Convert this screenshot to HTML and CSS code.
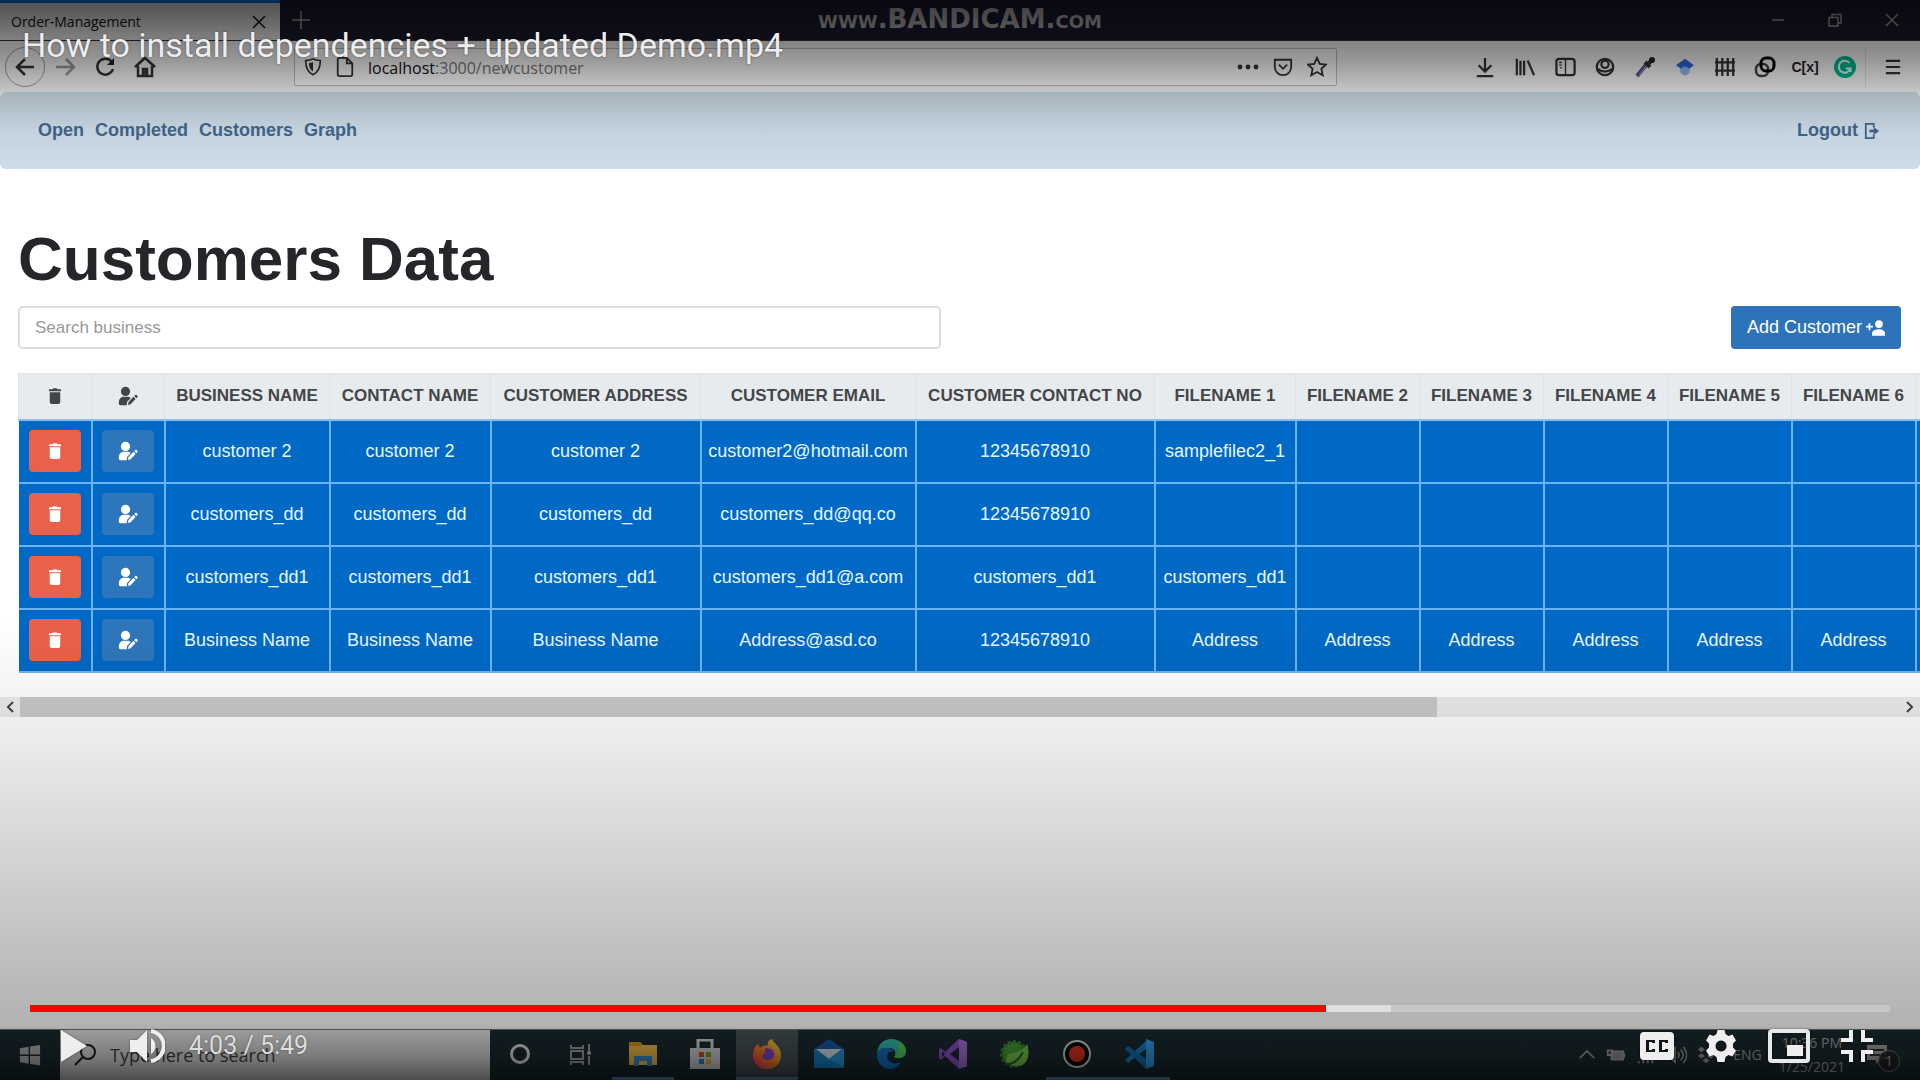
FILE: index.html
```html
<!DOCTYPE html>
<html lang="en">
<head>
<meta charset="utf-8">
<title>How to install dependencies + updated Demo.mp4</title>
<link rel="stylesheet" href="styles.css">
</head>
<body>
<svg class="sprite" aria-hidden="true">
  <symbol id="trash" viewBox="0 0 24 24"><path d="M5 7h14v13a2.500 2.500 0 0 1-2.500 2.500h-9A2.500 2.500 0 0 1 5 20zM4 3h4.500L10 1.500h4L15.500 3H20v2.500H4z"/></symbol>
  <symbol id="user-edit" viewBox="0 0 24 24"><circle cx="9" cy="6.500" r="5.500"/><path d="M1 20c0-4.500 3-7 6-7h4c2 0 3.200.6 4.200 1.600L11 19l-.6 4H3c-1.300 0-2-.9-2-2zM12.500 19.500l6-6.500 2.600 2.600-6 6.400-3.100.7zM19.500 12l1.300-1.200c.6-.5 1.200-.5 1.700 0l.8.900c.5.500.5 1.100 0 1.700L22.100 14.700z"/></symbol>
  <symbol id="win" viewBox="0 0 24 24"><path d="M1 4.500 10.500 3v8.500H1zM12 2.800 23 1v10.500H12zM1 13h9.500v8.500L1 20zM12 13h11v10.500l-11-1.800z"/></symbol>
</svg>
<div class="player">
  <div class="screen">
    <header class="tabs">
      <div class="tab"><span>Order-Management</span><button aria-label="Close tab"><svg viewBox="0 0 14 14" width="14" height="14"><path d="M1 1l12 12M13 1 1 13"/></svg></button></div>
      <button class="new-tab" aria-label="New tab"><svg viewBox="0 0 18 18" width="18" height="18"><path d="M9 0v18M0 9h18"/></svg></button>
      <div class="watermark"><span>www.</span>BANDICAM<span>.com</span></div>
      <div class="window-buttons">
        <button aria-label="Minimize"><svg viewBox="0 0 14 14" width="14" height="14"><path d="M1 7h12"/></svg></button>
        <button aria-label="Restore"><svg viewBox="0 0 14 14" width="14" height="14"><path d="M1 4.500h9v8.500H1zM4 4V1.500h9V10h-3"/></svg></button>
        <button aria-label="Close window"><svg viewBox="0 0 14 14" width="14" height="14"><path d="M1 1l12 12M13 1 1 13"/></svg></button>
      </div>
    </header>

    <div class="toolbar">
      <div class="nav-buttons">
        <button class="back" aria-label="Back"><svg viewBox="0 0 22 22" width="22" height="22"><path d="M20 11H3M11 3l-8 8 8 8"/></svg></button>
        <button class="forward" aria-label="Forward"><svg viewBox="0 0 22 22" width="22" height="22"><path d="M2 11h17M12 3l8 8-8 8"/></svg></button>
        <button aria-label="Reload"><svg viewBox="0 0 22 22" width="22" height="22"><path d="M17.500 5.500A8 8 0 1 0 19 13"/><path d="M20 2v7h-7z" fill="#222" stroke="none"/></svg></button>
        <button aria-label="Home"><svg viewBox="0 0 22 22" width="22" height="22"><path d="M1 11 11 2l10 9M4 10v10h14V10"/><path d="M9 20v-7h4v7" fill="#444"/></svg></button>
      </div>
      <div class="address">
        <svg class="line" viewBox="0 0 22 22" width="18" height="20"><path d="M11 1c3 2 6 2 9 2 0 8-2 14-9 17.500C4 17 2 11 2 3c3 0 6 0 9-2z"/><path d="M11 5c-2 1-3 1-5 1.300C6 11 8 15 11 16.500z" fill="#333" stroke="none"/></svg>
        <svg class="line" viewBox="0 0 22 22" width="20" height="20"><path d="M3 3c0-1 1-2 2-2h8l6 6v12c0 1-1 2-2 2H5c-1 0-2-1-2-2zM13 1v6h6"/></svg>
        <p class="url"><b>localhost</b>:3000/newcustomer</p>
        <svg class="dots" viewBox="0 0 22 22" width="22" height="22"><circle cx="3" cy="11" r="2.400"/><circle cx="11" cy="11" r="2.400"/><circle cx="19" cy="11" r="2.400"/></svg>
        <svg class="line" viewBox="0 0 22 22" width="22" height="20"><path d="M2 3h18v8a9 9 0 0 1-18 0zM6.500 8.500 11 13l4.500-4.500"/></svg>
        <svg class="line" viewBox="0 0 22 22" width="20" height="22"><path d="m11 1 3 6.500 7 .8-5.200 4.700 1.500 7L11 16.500 4.700 20l1.500-7L1 8.300l7-.8z"/></svg>
      </div>
      <div class="extensions">
        <button aria-label="Downloads"><svg viewBox="0 0 22 22" width="20" height="22"><path d="M11 1v14M4 9l7 7 7-7M2 21h18"/></svg></button>
        <button aria-label="Library"><svg viewBox="0 0 22 22" width="20" height="22"><path d="M2 2v18M6 4v16M10 4v16M14 4l7 16"/></svg></button>
        <button aria-label="Sidebars"><svg viewBox="0 0 22 22" width="21" height="20"><rect x="1" y="2" width="20" height="18" rx="3"/><path d="M11 2v18M4 6h3M4 9h3M5 12h2" stroke-width="1.500"/></svg></button>
        <button aria-label="Account"><svg viewBox="0 0 22 22" width="20" height="20"><circle cx="11" cy="11" r="9"/><circle cx="11" cy="8" r="4"/><path d="M3 13c4 4 12 4 16 0"/></svg></button>
        <button aria-label="Colour picker"><svg viewBox="0 0 22 22" width="22" height="22"><path d="M3 20 12 9" stroke="#574d8b" stroke-width="4"/><path d="M5 19 14 8" stroke="#aaa" stroke-width="1"/><path d="m11 6 5 5M14 8l4-4" stroke-width="4"/><circle cx="18" cy="4" r="3" fill="#222" stroke="none"/></svg></button>
        <button aria-label="Scholar"><svg viewBox="0 0 22 22" width="18" height="22"><circle cx="11" cy="15" r="6" fill="#8eb8f8" stroke="none"/><path d="m11 1 11 8-6 4c-3-3-7-3-10 0L0 9z" fill="#2868d8" stroke="none"/></svg></button>
        <button aria-label="Grid"><svg viewBox="0 0 22 22" width="22" height="20"><path d="M2 1v20M8 1v20M14 1v20M20 1v20M0 6h22M0 15h22"/></svg></button>
        <button aria-label="Rings"><svg viewBox="0 0 22 22" width="22" height="22"><rect x="2" y="8" width="12" height="12" rx="5" stroke="#444"/><rect x="7" y="2" width="13" height="13" rx="5" stroke="#000" stroke-width="3"/></svg></button>
        <button class="cx" aria-label="Formula">C[x]</button>
        <button aria-label="Grammar"><svg viewBox="0 0 22 22" width="22" height="22"><circle cx="11" cy="11" r="11" fill="#00b58b" stroke="none"/><path d="M15.500 7a6 6 0 1 0 1 5.500h-4.500M16.500 12v4" stroke="#dff" stroke-width="2"/></svg></button>
        <button class="menu" aria-label="Menu"><svg viewBox="0 0 18 18" width="16" height="18"><path d="M1 2h16M1 9h16M1 16h16"/></svg></button>
      </div>
    </div>

    <nav class="site-nav">
      <a href="#">Open</a><a href="#">Completed</a><a href="#">Customers</a><a href="#">Graph</a>
      <a class="logout" href="#">Logout <svg viewBox="0 0 18 20" width="16" height="20"><path d="M11 6V2H2v16h9v-4"/><path d="M6 10h6" stroke-width="3"/><path d="M11 5.500 17 10l-6 4.500z" fill="#41668c" stroke="none"/></svg></a>
    </nav>

    <main>
      <h1>Customers Data</h1>
      <div class="actions">
        <input type="search" placeholder="Search business" aria-label="Search business">
        <button class="add">Add Customer <svg viewBox="0 0 22 20" width="19" height="18"><circle cx="15" cy="5.500" r="4.500"/><path d="M7 19v-3c0-3 5-4.500 8-4.500s7 1.500 7 4.500v3zM0 7.500h3v-3h2v3h3v2H5v3H3v-3H0z"/></svg></button>
      </div>
      <div class="table-wrap">
        <table>
          <colgroup><col class="c-icon"><col class="c-icon"><col class="c-business"><col class="c-contact"><col class="c-address"><col class="c-email"><col class="c-phone"><col class="c-file1"><col class="c-file"><col class="c-file"><col class="c-file"><col class="c-file"><col class="c-file"><col class="c-file"></colgroup>
          <thead><tr>
            <th><svg class="ico" width="18" height="18"><use href="#trash"/></svg></th><th><svg class="ico" width="22" height="20"><use href="#user-edit"/></svg></th>
            <th>BUSINESS NAME</th><th>CONTACT NAME</th><th>CUSTOMER ADDRESS</th><th>CUSTOMER EMAIL</th><th>CUSTOMER CONTACT NO</th><th>FILENAME 1</th><th>FILENAME 2</th><th>FILENAME 3</th><th>FILENAME 4</th><th>FILENAME 5</th><th>FILENAME 6</th><th></th>
          </tr></thead>
          <tbody>
            <tr><td><button class="del" aria-label="Delete"><svg width="18" height="18"><use href="#trash"/></svg></button></td><td><button class="edit" aria-label="Edit"><svg width="22" height="20"><use href="#user-edit"/></svg></button></td><td>customer 2</td><td>customer 2</td><td>customer 2</td><td>customer2@hotmail.com</td><td>12345678910</td><td>samplefilec2_1</td><td></td><td></td><td></td><td></td><td></td><td></td></tr>
            <tr><td><button class="del" aria-label="Delete"><svg width="18" height="18"><use href="#trash"/></svg></button></td><td><button class="edit" aria-label="Edit"><svg width="22" height="20"><use href="#user-edit"/></svg></button></td><td>customers_dd</td><td>customers_dd</td><td>customers_dd</td><td>customers_dd@qq.co</td><td>12345678910</td><td></td><td></td><td></td><td></td><td></td><td></td><td></td></tr>
            <tr><td><button class="del" aria-label="Delete"><svg width="18" height="18"><use href="#trash"/></svg></button></td><td><button class="edit" aria-label="Edit"><svg width="22" height="20"><use href="#user-edit"/></svg></button></td><td>customers_dd1</td><td>customers_dd1</td><td>customers_dd1</td><td>customers_dd1@a.com</td><td>customers_dd1</td><td>customers_dd1</td><td></td><td></td><td></td><td></td><td></td><td></td></tr>
            <tr><td><button class="del" aria-label="Delete"><svg width="18" height="18"><use href="#trash"/></svg></button></td><td><button class="edit" aria-label="Edit"><svg width="22" height="20"><use href="#user-edit"/></svg></button></td><td>Business Name</td><td>Business Name</td><td>Business Name</td><td>Address@asd.co</td><td>12345678910</td><td>Address</td><td>Address</td><td>Address</td><td>Address</td><td>Address</td><td>Address</td><td></td></tr>
          </tbody>
        </table>
      </div>
    </main>

    <div class="scrollbar">
      <button aria-label="Scroll left"><svg viewBox="0 0 8 12" width="8" height="12"><path d="M7 1 2 6l5 5"/></svg></button>
      <div class="track"><div class="thumb"></div></div>
      <button aria-label="Scroll right"><svg viewBox="0 0 8 12" width="8" height="12"><path d="m1 1 5 5-5 5"/></svg></button>
    </div>

    <footer class="taskbar">
      <button class="start" aria-label="Start"><svg width="22" height="22"><use href="#win"/></svg></button>
      <div class="task-search"><svg viewBox="0 0 22 22" width="22" height="22"><circle cx="14" cy="8" r="7"/><path d="m9 13-8 8"/></svg><span>Type here to search</span></div>
      <div class="apps">
        <button aria-label="Cortana"><svg viewBox="0 0 30 30" width="30" height="30"><circle cx="15" cy="15" r="8.500" fill="none" stroke="#eee" stroke-width="3"/></svg></button>
        <button aria-label="Task view"><svg viewBox="0 0 30 30" width="30" height="30"><path d="M5 6v3h12V6M5 12h12v8H5zM5 26v-3h12v3M23 5v7M23 17v9" fill="none" stroke="#aaa" stroke-width="2"/><circle cx="23" cy="14" r="2" fill="#ccc"/></svg></button>
        <button class="open" aria-label="File Explorer"><svg viewBox="0 0 30 30" width="30" height="30"><path d="M1 3h11l3 3h14v20H1z" fill="#ffc84a"/><path d="M1 3h11l2 4H1z" fill="#e59b1c"/><path d="M6 27V17h18v10h-5v-5h-8v5z" fill="#3f92da"/></svg></button>
        <button aria-label="Store"><svg viewBox="0 0 30 30" width="30" height="30"><path d="M8 9V1h14v8" fill="none" stroke="#ddd" stroke-width="3"/><path d="M0 9h30v21H0z" fill="#ddd"/><path d="M9 13h5v5H9z" fill="#e44b22"/><path d="M16 13h5v5h-5z" fill="#72ac1b"/><path d="M9 20h5v5H9z" fill="#118ce0"/><path d="M16 20h5v5h-5z" fill="#f5b51b"/></svg></button>
        <button class="open active" aria-label="Firefox"><svg viewBox="0 0 30 30" width="30" height="30"><defs><linearGradient id="fx" x1="1" x2="0" y2="1"><stop stop-color="#ffe94d"/><stop offset=".5" stop-color="#ff8a20"/><stop offset="1" stop-color="#ff2c65"/></linearGradient></defs><path d="M20 0c1 4 9 7 9 16A14 14 0 0 1 1 17C1 11 3 7 6 5l2 4c3-3 5-2 8-3-1-3 1-5 4-6z" fill="url(#fx)"/><path d="M14 9c6 0 9 3 8 8-1 4-7 6-11 2-1-2-1-5 3-5-2-1-2-3 0-5z" fill="#8b45d7"/></svg></button>
        <button aria-label="Mail"><svg viewBox="0 0 30 30" width="30" height="30"><path d="M0 10 15 0l15 10v5H0z" fill="#1660ac"/><path d="M0 10h30v19H0z" fill="#1689d6"/><path d="M2 10h26L15 20z" fill="#e8eef3"/><path d="m15 20 15 9V10z" fill="#25a5ee"/></svg></button>
        <button aria-label="Edge"><svg viewBox="0 0 30 30" width="30" height="30"><path d="M1 14C2 5 8 0 15 0c9 0 15 6 15 12 0 6-6 9-12 6 3-4 1-9-5-9-6 0-9 2-12 5z" fill="#35c6b2"/><path d="M22 2c6 3 8 7 8 10 0 6-6 9-12 6 6-4 5-10 4-16z" fill="#5adb62"/><path d="M1 13c3-5 14-6 17 0-6-2-9 4-5 9 3 3 8 3 12 1-3 5-7 7-11 7C6 30 0 23 1 13z" fill="#1477cf"/></svg></button>
        <button aria-label="Visual Studio"><svg viewBox="0 0 30 30" width="30" height="30"><path d="m21 0 8 3v24l-8 3L7 17l-4 4-2-2V10l2-1 4 4zM4 12v6l3-3zm17-4-9 7 9 7z" fill="#9455d6" fill-rule="evenodd"/><path d="m21 0 8 3v24l-8 3z" fill="#ad78e8"/></svg></button>
        <button aria-label="Spring"><svg viewBox="0 0 30 30" width="30" height="30"><circle cx="14" cy="15" r="12" fill="#4ba93a" stroke="#3b8a30" stroke-width="4" stroke-dasharray="3 2"/><path d="M27 5c4 12 0 22-10 22-9 1-13-5-10-10 4-5 14-1 20-12z" fill="#83d253"/><path d="M5 25c8 1 14-4 18-12" fill="none" stroke="#24662a" stroke-width="2"/></svg></button>
        <button class="open" aria-label="Recorder"><svg viewBox="0 0 30 30" width="30" height="30"><circle cx="15" cy="15" r="13" fill="#080808" stroke="#ddd" stroke-width="2"/><circle cx="15" cy="15" r="8" fill="#ed3522"/></svg></button>
        <button class="open" aria-label="Code"><svg viewBox="0 0 30 30" width="30" height="30"><path d="M22 0v10L4 24l-3-3L22 2z" fill="#1687d4"/><path d="M22 30V20L4 7 1 10z" fill="#1376bc"/><path d="m22 0 8 3v24l-8 3z" fill="#35a5f2"/></svg></button>
      </div>
      <div class="tray">
        <svg viewBox="0 0 22 22" width="18" height="20"><path d="m2 15 9-9 9 9"/></svg>
        <svg viewBox="0 0 22 22" width="22" height="20"><path d="M6 7h13v9H6z" fill="#999"/><path d="M2 6h5v5H2zM20 9v5"/></svg>
        <svg viewBox="0 0 22 22" width="20" height="20"><path d="M3 20v-2M8 20v-6M13 20v-9M18 20V7"/></svg>
        <svg viewBox="0 0 22 22" width="22" height="20"><path d="M1 8h4l5-5v16l-5-5H1zM13 8c2 2 2 4 0 6M16 5c4 4 4 8 0 12M19 2c5 6 5 12 0 18" stroke-width="1.500"/></svg>
        <svg viewBox="0 0 22 22" width="20" height="20"><path d="m6 2 4 3-4 3-4-3zM16 2l4 3-4 3-4-3zM6 9l4 3-4 3-4-3zM16 9l4 3-4 3-4-3zM11 14l4 3-4 3-4-3z" fill="#999" stroke="none"/></svg>
        <span class="lang">ENG</span>
        <p class="clock">10:36 PM<br>1/25/2021</p>
        <div class="notices"><svg viewBox="0 0 22 22" width="22" height="22"><path d="M1 1h20v15h-7l-4 4v-4H1z" fill="#aaa" stroke="none"/><path d="M4 6h14M4 11h14" stroke="#333"/></svg><span class="badge">1</span></div>
      </div>
    </footer>
  </div>

  <div class="shade top"></div>
  <div class="shade bottom"></div>
  <p class="video-title">How to install dependencies + updated Demo.mp4</p>
  <div class="chrome">
    <div class="progress"><div class="loaded"></div><div class="played"></div></div>
    <div class="controls">
      <button aria-label="Play"><svg viewBox="0 0 28 32" width="28" height="32"><path d="M1 0v32l26-16z"/></svg></button>
      <button class="volume" aria-label="Mute"><svg viewBox="0 0 36 36" width="36" height="36"><path d="M1 12h7L18 2v32L8 24H1zM22 10c6 3 6 13 0 16z"/><path d="M22 3c17 3 17 27 0 30" fill="none" stroke="#eee" stroke-width="4"/></svg></button>
      <span class="time">4:03 / 5:49</span>
      <div class="right">
        <button aria-label="Subtitles"><svg viewBox="0 0 34 28" width="34" height="28"><path d="M4 0h26q4 0 4 4v20q0 4-4 4H4q-4 0-4-4V4q0-4 4-4zM15 11V8H6v12h9v-3h-3v1H9v-8h3v1zM28 11V8h-9v12h9v-3h-3v1h-3v-8h3v1z" fill-rule="evenodd"/></svg></button>
        <button aria-label="Settings"><svg viewBox="0 0 32 32" width="32" height="32"><path d="M12.500 0h7l1 4 3 2 4-1.500 3.500 6-3 3v4l3 3-3.500 6-4-1.500-3 2-1 5h-7l-1-5-3-2-4 1.500-3.500-6 3-3v-4l-3-3 3.500-6 4 1.500 3-2zM16 10.500a5.500 5.500 0 1 0 .1 0z" fill-rule="evenodd"/></svg></button>
        <button aria-label="Miniplayer"><svg viewBox="0 0 42 34" width="42" height="34"><rect x="2" y="2" width="38" height="30" rx="2" fill="none" stroke="#e8e8e8" stroke-width="4"/><path d="M19 16h16v11H19z"/></svg></button>
        <button aria-label="Exit full screen"><svg viewBox="0 0 32 32" width="32" height="32"><path d="M8 0h4v12H0V8h8zM20 0h4v8h8v4H20zM0 20h12v12H8v-8H0zM20 20h12v4h-8v8h-4z"/></svg></button>
      </div>
    </div>
  </div>
</div>
</body>
</html>
```

FILE: styles.css
```css
* { box-sizing: border-box; }
body { margin: 0; background: #fff; font-family: "Liberation Sans", Arial, sans-serif; font-size: 18px; color: #212529; }
p { margin: 0; }
button { border: 0; padding: 0; background: none; font: inherit; color: inherit; display: flex; align-items: center; justify-content: center; }
svg { display: block; flex: none; }
.sprite { display: none; }

.player { position: relative; overflow: hidden; }
.screen { min-height: 100vh; display: flex; flex-direction: column; }

/* Browser window */
.tabs { height: 41px; display: flex; align-items: stretch; background: #1b1b30; border-bottom: 1px solid #34344a; color: #999; position: relative; }
.tabs svg { fill: none; stroke: #aaa; stroke-width: 1.500; }
.tab { width: 280px; padding: 0 14px 0 11px; display: flex; align-items: center; justify-content: space-between; background: #f3f3f4; border-top: 3px solid #0a84ff; color: #111; font: 14px "Open Sans", "Noto Sans", sans-serif; }
.tab svg { stroke: #111; }
.new-tab { width: 42px; }
.watermark { position: absolute; left: 50%; top: 0; transform: translateX(-50%); font: bold 26px/38px "DejaVu Sans", sans-serif; color: #b8b8bc; white-space: nowrap; }
.watermark span { font-variant: small-caps; }
.window-buttons { margin-left: auto; padding-right: 21px; display: flex; gap: 42px; }
.window-buttons button { width: 15px; }

.toolbar { height: 51px; display: flex; align-items: center; background: #f5f5f6; color: #222; }
.toolbar svg { fill: none; stroke: #333; stroke-width: 2.500; }
.nav-buttons { width: 294px; padding-left: 5px; display: flex; align-items: center; }
.nav-buttons button { width: 40px; height: 40px; }
.nav-buttons .back { border: 1px solid #999; border-radius: 50%; }
.nav-buttons .forward svg { stroke: #999; }
.address { width: 1043px; flex: 0 1 auto; height: 38px; padding: 0 9px; display: flex; align-items: center; gap: 13px; border: 1px solid #bbb; border-radius: 2px; background: #fafafa; }
.address .line { stroke-width: 2; }
.address .dots { fill: #333; stroke: none; }
.url { flex: 1; margin-top: 2px; font: 16px "Open Sans", "Noto Sans", sans-serif; color: #777; }
.url b { color: #111; font-weight: 400; }
.extensions { margin-left: auto; padding-right: 5px; display: flex; align-items: center; }
.extensions button { width: 40px; height: 40px; }
.extensions .cx { font-size: 14px; font-weight: bold; }
.extensions .menu { width: 50px; border-left: 1px solid #ddd; padding-left: 4px; }

/* Customers site */
.site-nav { height: 77px; padding: 0 40px 0 38px; display: flex; align-items: center; gap: 11px; background: #cddde9; border-radius: 6px; font-weight: bold; }
.site-nav a { color: #41668c; text-decoration: none; }
.site-nav .logout { margin-left: auto; display: flex; align-items: center; gap: 6px; }
.logout svg { fill: none; stroke: #41668c; stroke-width: 2; }
main { padding: 54px 0 0 18px; }
h1 { margin: 0; font-size: 62px; line-height: 72px; color: #24262a; }
.actions { margin: 11px 19px 0 0; display: flex; justify-content: space-between; }
.actions input { width: 49%; height: 43px; padding: 0 15px; border: 2px solid #dcdddd; border-radius: 5px; font: 17px "Liberation Sans", Arial, sans-serif; outline: 0; }
.actions input::placeholder { color: #999; opacity: 1; }
.add { height: 43px; padding: 0 16px; gap: 4px; border-radius: 4px; background: #2c73b9; color: #fff; }
.add svg { fill: #fff; }
.table-wrap { margin-top: 24px; overflow: hidden; }
table { width: 2020px; table-layout: fixed; border-collapse: collapse; }
.c-icon { width: 73px; }
.c-business { width: 165px; }
.c-contact { width: 161px; }
.c-address { width: 210px; }
.c-email { width: 215px; }
.c-phone { width: 239px; }
.c-file1 { width: 141px; }
.c-file { width: 124px; }
th { height: 46px; padding: 0; background: #e8ebee; border: 1px solid #e0e3e7; border-bottom: 2px solid #8bbdec; font-size: 17px; color: #434649; white-space: nowrap; }
td { height: 63px; padding: 0; border: 2px solid #6cb3f3; background: #0069c5; color: #e9f8ff; text-align: center; }
tr td:first-child { border-left: 0; }
.ico { margin: 0 auto; fill: #434649; }
td button { width: 52px; height: 42px; margin: 0 auto; border-radius: 4px; }
td button svg { fill: #fff; }
.del { background: #eb604b; }
.edit { background: #2e76bb; }
.scrollbar { height: 20px; margin-top: 24px; display: flex; background: #ececec; }
.scrollbar button { width: 20px; }
.scrollbar svg { fill: none; stroke: #444; stroke-width: 2; }
.track { flex: 1; display: flex; }
.thumb { width: calc(75% + 7px); background: #c9c9c9; }

/* Windows taskbar */
.taskbar { height: 51px; margin-top: auto; display: flex; background: #1b2c32; border-top: 1px solid #777; color: #ddd; }
.start { width: 60px; fill: #bbb; }
.task-search { width: 430px; padding-left: 14px; display: flex; align-items: center; gap: 14px; background: #ebebeb; color: #444; font: 18px "Open Sans", "Noto Sans", sans-serif; }
.task-search svg { fill: none; stroke: #222; stroke-width: 2; }
.apps { display: flex; }
.apps button { width: 62px; border-bottom: 3px solid transparent; }
.apps button:first-child { width: 60px; }
.apps .open { border-color: #6590d8; }
.apps .active { background: #4b565c; }
.tray { margin-left: auto; padding-right: 20px; display: flex; align-items: center; gap: 9px; font: 14px/24px "Open Sans", "Noto Sans", sans-serif; color: #aaa; }
.tray svg { fill: none; stroke: #aaa; stroke-width: 2; }
.lang { margin: 0 8px; }
.clock { margin-right: 8px; text-align: center; }
.notices { position: relative; width: 38px; padding-left: 4px; }
.badge { position: absolute; right: 0; top: 6px; width: 22px; height: 22px; border: 1px solid #777; border-radius: 50%; background: #222d; line-height: 20px; text-align: center; }

/* Video overlay */
.shade { position: absolute; left: 0; right: 0; pointer-events: none; }
.shade.top { top: 0; height: 170px; background: linear-gradient(#000000ac 0, #00000094 20px, #00000075 42px, #00000062 60px, #0000003b 85px, #0000002e 95px, #0000000d 130px, #0000 170px); }
.shade.bottom { bottom: 0; height: 460px; background: linear-gradient(to top, #000000ae 0, #00000080 20px, #00000059 48px, #0000004d 54px, #00000045 100px, #0000002c 220px, #00000012 350px, #00000008 408px, #0000 460px); }
.video-title { position: absolute; left: 22px; top: 25px; font: 34px/40px Roboto, sans-serif; color: #eee; white-space: nowrap; text-shadow: 0 0 2px #0008; }
.chrome { position: absolute; left: 30px; right: 30px; bottom: 16px; }
.progress { position: relative; height: 7px; background: #c6c6c6; }
.progress div { position: absolute; left: 0; top: 0; height: 100%; }
.loaded { width: calc(73% + 3px); background: #dfdfdf; }
.played { width: calc(70% - 6px); background: #f00; }
.controls { height: 36px; margin-top: 16px; padding: 0 17px 0 30px; display: flex; align-items: center; }
.controls svg { fill: #eee; filter: drop-shadow(0 0 1px #0006); }
.volume { margin: 0 24px 0 41px; }
.time { font: 25px/32px Roboto, sans-serif; color: #ddd; text-shadow: 0 0 2px #0006; }
.right { margin-left: auto; display: flex; align-items: center; gap: 31px; }
```
